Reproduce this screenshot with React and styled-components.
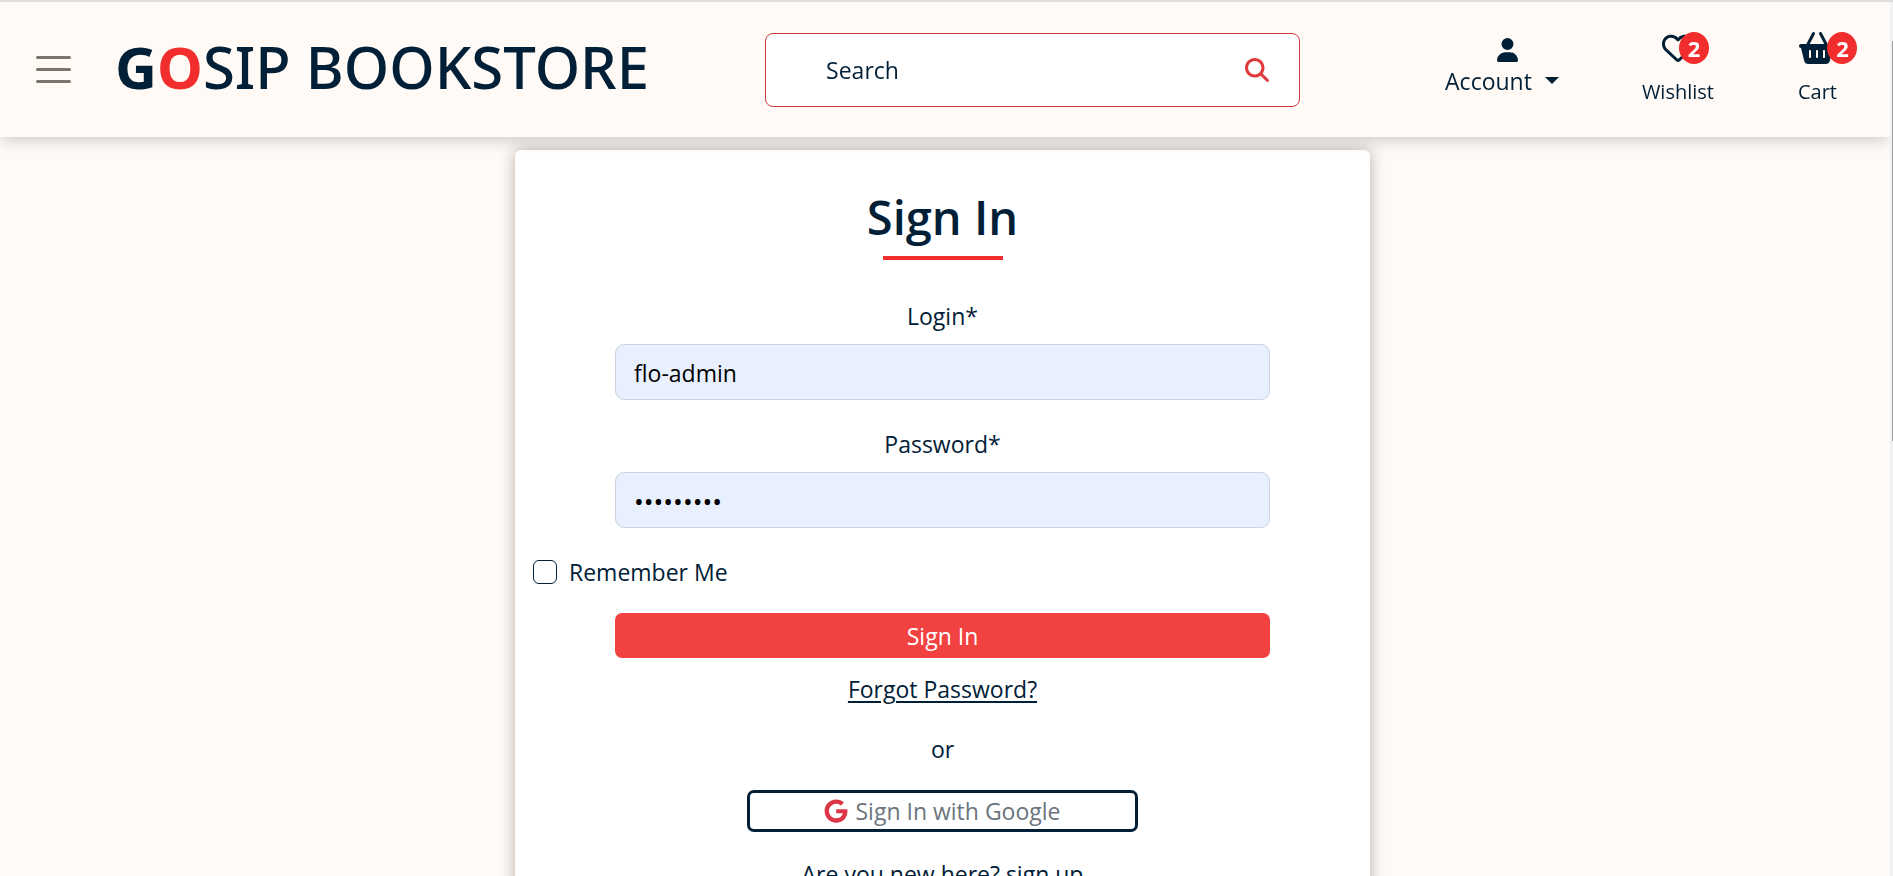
import React from 'react';
import styled, { createGlobalStyle, css } from 'styled-components';
import { FaBasketShopping, FaGoogle, FaMagnifyingGlass, FaRegHeart, FaUser } from 'react-icons/fa6';

const navy = '#012037';
const red = '#f12d2d';
const crimson = '#dc3545';

const GlobalStyle = createGlobalStyle`
  * { box-sizing: border-box; }
  body {
    margin: 0;
    background: #fffaf5;
    color: ${navy};
    font: 23px/36px "Open Sans", "Noto Sans", sans-serif;
  }
  button, input { font: inherit; color: inherit; }
`;

const Shell = styled.div`
  height: 100vh;
  display: flex;
  border-top: 2px solid #dddddc;
`;

const Page = styled.div`
  flex: 1;
  min-width: 0;
  overflow: hidden auto;
  scrollbar-width: none;
`;

const Rail = styled.div`
  flex: 0 0 3px;
  display: flex;
  justify-content: flex-end;
  padding-top: 39px;
  background: #f1f1f1;
`;

const Thumb = styled.div`
  width: 1px;
  height: 400px;
  background: #a0a0a0;
`;

const Header = styled.header`
  position: sticky;
  top: 0;
  z-index: 1;
  display: flex;
  align-items: center;
  height: 135px;
  padding: 0 53px 0 36px;
  background: #fffaf5;
  box-shadow: 0 6px 14px -2px rgba(0, 0, 0, 0.18);
`;

const MenuButton = styled.button`
  flex: none;
  display: flex;
  padding: 0;
  border: 0;
  background: none;
  color: #7a736e;
`;

const Logo = styled.a`
  flex: none;
  margin-left: 44px;
  padding-bottom: 6px;
  color: ${navy};
  font-family: "Noto Sans", "Open Sans", sans-serif;
  font-size: 58px;
  line-height: 72px;
  font-weight: 500;
  text-decoration: none;
  white-space: nowrap;
`;

const Strong = styled.span`
  font-weight: 700;
  color: ${(p) => (p.$accent ? red : 'inherit')};
`;

const SearchForm = styled.form`
  flex: 0 1 535px;
  display: flex;
  align-items: center;
  height: 74px;
  margin: 0 145px 0 auto;
  padding: 0 30px 0 60px;
  border: 1px solid #c9393e;
  border-radius: 8px;
  background: #fff;
`;

const SearchInput = styled.input`
  flex: 1;
  min-width: 0;
  padding: 0;
  border: 0;
  outline: 0;
  background: none;
  &::placeholder { color: ${navy}; opacity: 1; }
`;

const IconButton = styled.button`
  display: flex;
  padding: 0;
  border: 0;
  background: none;
  color: #e03a3c;
`;

const Nav = styled.nav`
  flex: none;
  display: flex;
  align-items: flex-start;
`;

const AccountButton = styled.button`
  display: flex;
  flex-direction: column;
  align-items: center;
  padding: 6px 0 0;
  border: 0;
  background: none;
  line-height: 38px;
`;

const AccountLabel = styled.span`
  display: flex;
  align-items: center;
  gap: 13px;
  padding-right: 12px;
`;

const NavLink = styled.a`
  display: flex;
  flex-direction: column;
  align-items: center;
  color: ${navy};
  font-size: 20px;
  line-height: 32px;
  text-decoration: none;
  margin-left: ${(p) => p.$gap}px;
`;

const IconWrap = styled.span`
  position: relative;
  display: flex;
  align-items: flex-start;
  height: 44px;
`;

const Badge = styled.span`
  position: absolute;
  top: 0;
  left: calc(100% - ${(p) => p.$overlap}px);
  width: 30px;
  height: 32px;
  border-radius: 50%;
  background: ${red};
  color: #fff;
  font-size: 22px;
  font-weight: 700;
  text-align: center;
`;

const Main = styled.main`
  display: flex;
  justify-content: center;
  padding: 13px 5px 60px 0;
`;

const Card = styled.form`
  width: 100%;
  max-width: 855px;
  padding: 35px 0 48px;
  display: flex;
  flex-direction: column;
  border-radius: 6px;
  background: #fff;
  box-shadow: 0 0 16px rgba(0, 0, 0, 0.3);
  text-align: center;
`;

const Title = styled.h1`
  margin: 0 auto;
  font-size: 47px;
  line-height: 64px;
  font-weight: 600;
`;

const Underline = styled.div`
  width: 120px;
  height: 4px;
  margin: 7px auto 38px;
  background: ${red};
`;

const Field = styled.div`
  display: flex;
  flex-direction: column;
  gap: 10px;
  margin: 0 100px 26px;
`;

const TextInput = styled.input`
  width: 100%;
  height: 56px;
  padding: 2px 18px 0;
  border: 1px solid #c9d3e0;
  border-radius: 9px;
  background: #e8effd;
  color: #000;
  font-size: ${(p) => (p.type === 'password' ? 26 : 23)}px;
`;

const Remember = styled.label`
  display: flex;
  align-items: center;
  gap: 12px;
  margin: 0 18px 23px;
`;

const Checkbox = styled.input`
  appearance: none;
  width: 24px;
  height: 24px;
  margin: 0;
  border: 1px solid ${navy};
  border-radius: 6px;
  background: #fff;
`;

const buttonBase = css`
  display: flex;
  align-items: center;
  justify-content: center;
  padding: 0;
  border-radius: 7px;
`;

const SubmitButton = styled.button`
  ${buttonBase}
  height: 45px;
  margin: 0 100px 13px;
  border: 0;
  background: #f24141;
  color: #fff;
`;

const ForgotLink = styled.a`
  align-self: center;
  color: ${navy};
  text-decoration: underline;
  text-decoration-thickness: 2px;
  text-underline-offset: 3px;
`;

const Text = styled.p`
  margin: 24px 0 0;
`;

const GoogleButton = styled.button`
  ${buttonBase}
  align-self: center;
  width: 391px;
  height: 42px;
  margin-top: 23px;
  gap: 7px;
  border: 3px solid ${navy};
  background: #fff;
  color: #6c757d;
`;

const PlainLink = styled.a`
  color: inherit;
  text-decoration: none;
`;

const BasketIcon = styled(FaBasketShopping)`
  width: 36px;
  height: 32px;
`;

const UserIcon = styled(FaUser)`
  width: 21px;
  height: 24px;
`;

function MenuIcon() {
  return (
    <svg width="35" height="27" viewBox="0 0 35 27" fill="none" stroke="currentColor" strokeWidth="3" strokeLinecap="round">
      <path d="M1.5 1.5h32M1.5 13.5h32M1.5 25.5h32" />
    </svg>
  );
}

function Caret() {
  return (
    <svg width="14" height="7" viewBox="0 0 14 7" fill="currentColor">
      <path d="M0 0h14L7 7z" />
    </svg>
  );
}

function CountLink({ icon, count, label, gap, overlap }) {
  return (
    <NavLink href="#" $gap={gap}>
      <IconWrap>
        {icon}
        <Badge $overlap={overlap}>{count}</Badge>
      </IconWrap>
      {label}
    </NavLink>
  );
}

export default function App() {
  return (
    <Shell>
      <GlobalStyle />
      <Page>
        <Header>
          <MenuButton type="button" aria-label="Menu"><MenuIcon /></MenuButton>
          <Logo href="#"><Strong>G</Strong><Strong $accent>O</Strong>SIP BOOKSTORE</Logo>
          <SearchForm>
            <SearchInput type="text" placeholder="Search" aria-label="Search" />
            <IconButton type="button" aria-label="Submit search"><FaMagnifyingGlass size={24} /></IconButton>
          </SearchForm>
          <Nav>
            <AccountButton type="button">
              <UserIcon />
              <AccountLabel>Account <Caret /></AccountLabel>
            </AccountButton>
            <CountLink icon={<FaRegHeart size={32} />} count={2} label="Wishlist" gap={71} overlap={15} />
            <CountLink icon={<BasketIcon />} count={2} label="Cart" gap={84} overlap={8} />
          </Nav>
        </Header>
        <Main>
          <Card>
            <Title>Sign In</Title>
            <Underline />
            <Field>
              <label htmlFor="login">Login*</label>
              <TextInput id="login" type="text" defaultValue="flo-admin" />
            </Field>
            <Field>
              <label htmlFor="password">Password*</label>
              <TextInput id="password" type="password" defaultValue="bookstore" />
            </Field>
            <Remember>
              <Checkbox type="checkbox" />
              Remember Me
            </Remember>
            <SubmitButton type="button">Sign In</SubmitButton>
            <ForgotLink href="#">Forgot Password?</ForgotLink>
            <Text>or</Text>
            <GoogleButton type="button"><FaGoogle size={24} color={crimson} />Sign In with Google</GoogleButton>
            <Text>Are you new here? <PlainLink href="#">sign up</PlainLink></Text>
          </Card>
        </Main>
      </Page>
      <Rail><Thumb /></Rail>
    </Shell>
  );
}
